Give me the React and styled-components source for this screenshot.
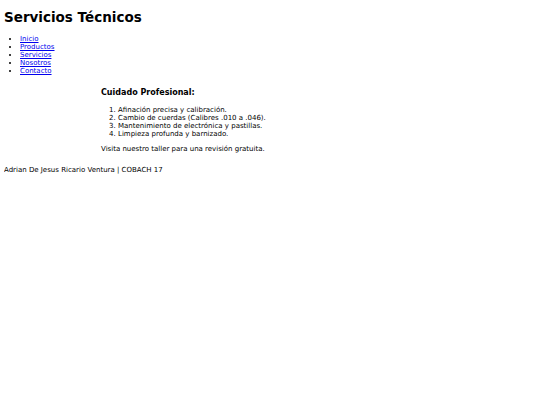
import React from "react"
import styled, { createGlobalStyle } from "styled-components"

const GlobalStyle = createGlobalStyle`
  body {
    margin: 4px;
    background: #fff;
    color: #000;
    font-family: "DejaVu Sans", Verdana, sans-serif;
    font-size: 7px;
    line-height: 8px;
  }
`

const Header = styled.header`
  padding-top: 4px;
`

const Title = styled.h1`
  margin: 0;
  font-size: 13.5px;
  line-height: 18px;
  font-weight: bold;
`

const NavList = styled.ul`
  margin: 9px 0 0;
  padding-left: 16px;
`

const NavItem = styled.li`
  a {
    color: #00e;
  }
`

const Main = styled.main`
  margin: 12px 0 0 97px;
`

const Heading = styled.h3`
  margin: 0;
  font-size: 8px;
  line-height: 12px;
`

const Steps = styled.ol`
  margin: 7px 0 0;
  padding-left: 17px;
`

const Note = styled.p`
  margin: 7px 0 0;
`

const Footer = styled.footer`
  margin-top: 13px;
`

const links = ["Inicio", "Productos", "Servicios", "Nosotros", "Contacto"]

const steps = [
  "Afinación precisa y calibración.",
  "Cambio de cuerdas (Calibres .010 a .046).",
  "Mantenimiento de electrónica y pastillas.",
  "Limpieza profunda y barnizado.",
]

const App = () => (
  <>
    <GlobalStyle />
    <Header>
      <Title>Servicios Técnicos</Title>
      <nav>
        <NavList>
          {links.map(l => (
            <NavItem key={l}>
              <a href="#">{l}</a>
            </NavItem>
          ))}
        </NavList>
      </nav>
    </Header>
    <Main>
      <Heading>Cuidado Profesional:</Heading>
      <Steps>
        {steps.map(s => (
          <li key={s}>{s}</li>
        ))}
      </Steps>
      <Note>Visita nuestro taller para una revisión gratuita.</Note>
    </Main>
    <Footer>Adrian De Jesus Ricario Ventura | COBACH 17</Footer>
  </>
)

export default App
